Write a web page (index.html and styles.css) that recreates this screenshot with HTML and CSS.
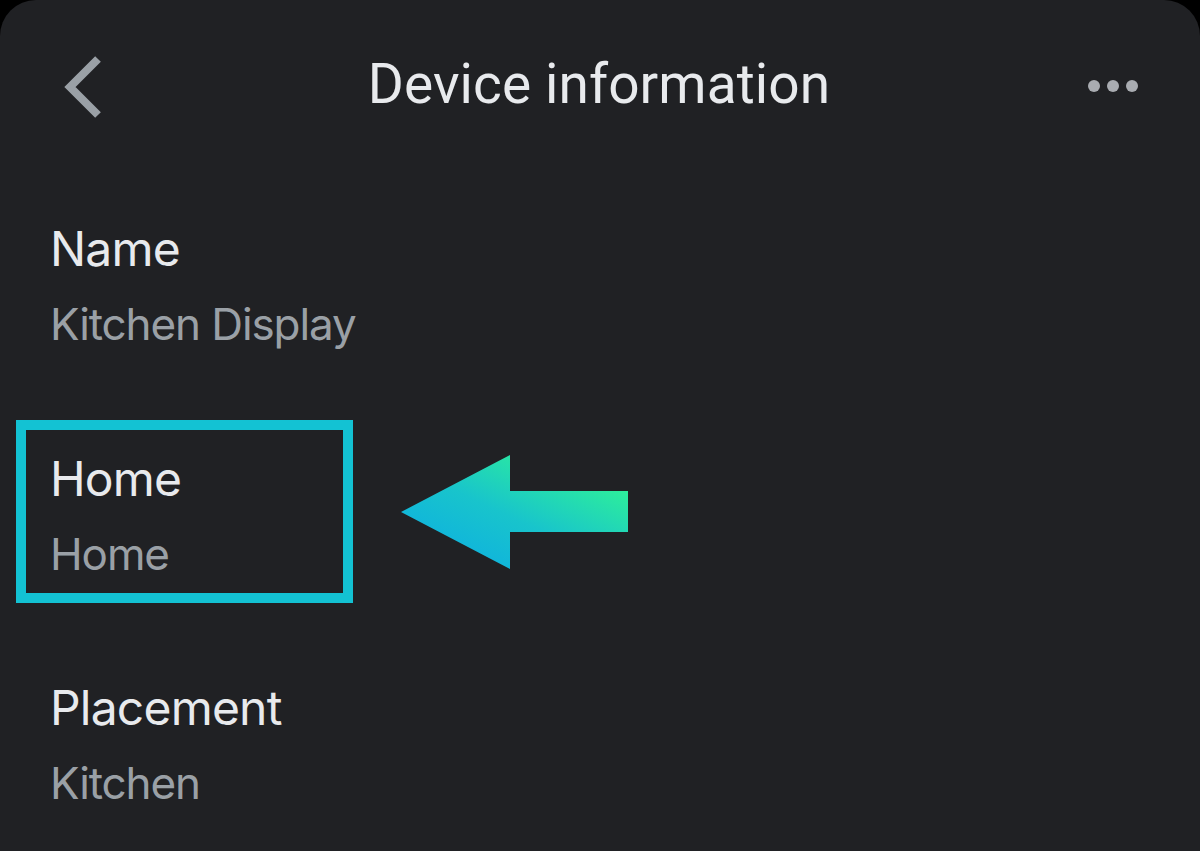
FILE: index.html
```html
<!DOCTYPE html>
<html>
<head>
<meta charset="utf-8">
<link rel="stylesheet" href="styles.css">
</head>
<body>
<div class="panel">
  <header class="topbar">
    <svg class="back" width="50" height="70" viewBox="0 0 50 70">
      <polyline points="38,8 10,36 38,64" fill="none" stroke="#9aa0a6" stroke-width="8" stroke-linecap="butt" stroke-linejoin="miter"/>
    </svg>
    <h1 class="title">Device information</h1>
    <svg class="more" width="52" height="14" viewBox="0 0 52 14">
      <circle cx="6" cy="7" r="6" fill="#a9acb1"/>
      <circle cx="25" cy="7" r="6" fill="#a9acb1"/>
      <circle cx="44" cy="7" r="6" fill="#a9acb1"/>
    </svg>
  </header>
  <main class="list">
    <section class="row row-name">
      <div class="label">Name</div>
      <div class="value">Kitchen Display</div>
    </section>
    <div class="home-line">
      <section class="row highlight">
        <div class="label">Home</div>
        <div class="value">Home</div>
      </section>
      <svg class="arrow" width="227" height="114" viewBox="0 0 227 114">
        <defs>
          <linearGradient id="ag" x1="0.25" y1="1" x2="1" y2="0.2">
            <stop offset="0" stop-color="#0eb0e0"/>
            <stop offset="0.45" stop-color="#18c4cc"/>
            <stop offset="1" stop-color="#31f593"/>
          </linearGradient>
        </defs>
        <path d="M0 57 L109 0 L109 36 L227 36 L227 77 L109 77 L109 114 Z" fill="url(#ag)"/>
      </svg>
    </div>
    <section class="row row-placement">
      <div class="label">Placement</div>
      <div class="value">Kitchen</div>
    </section>
  </main>
</div>
</body>
</html>
```
FILE: styles.css
```css
html, body {
  margin: 0;
  padding: 0;
  background: #000;
}
body {
  width: 1200px;
  height: 851px;
  overflow: hidden;
  font-family: Inter, "Noto Sans", sans-serif;
}
.panel {
  background: #202124;
  border-radius: 36px 36px 0 0;
  height: 851px;
  box-sizing: border-box;
}
.topbar {
  height: 168px;
  display: flex;
  align-items: center;
  justify-content: space-between;
  padding: 0 60px 0 60px;
  box-sizing: border-box;
}
.back {
  display: block;
  margin-top: 4px;
}
.more {
  display: block;
  margin-top: 4px;
}
.title {
  margin: 0;
  font-family: Roboto, "Open Sans", sans-serif;
  font-weight: 400;
  font-size: 55px;
  line-height: 64px;
  color: #e8eaed;
  letter-spacing: 0.1px;
}
.list {
  display: flex;
  flex-direction: column;
}
.row {
  display: flex;
  flex-direction: column;
  gap: 17px;
}
.label {
  font-size: 48px;
  line-height: 58px;
  color: #e8eaed;
  letter-spacing: -0.8px;
}
.value {
  font-size: 44px;
  line-height: 58px;
  color: #9aa0a6;
  letter-spacing: -1.1px;
}
.row-name {
  padding-left: 50px;
  margin-top: 52px;
}
.home-line {
  display: flex;
  align-items: center;
  margin-top: 67px;
  padding-left: 16px;
}
.highlight {
  width: 337px;
  height: 183px;
  box-sizing: border-box;
  border: 10px solid #13c2d3;
  padding: 20px 0 0 24px;
}
.arrow {
  display: block;
  margin-left: 48px;
}
.row-placement {
  padding-left: 50px;
  margin-top: 76px;
}
```
